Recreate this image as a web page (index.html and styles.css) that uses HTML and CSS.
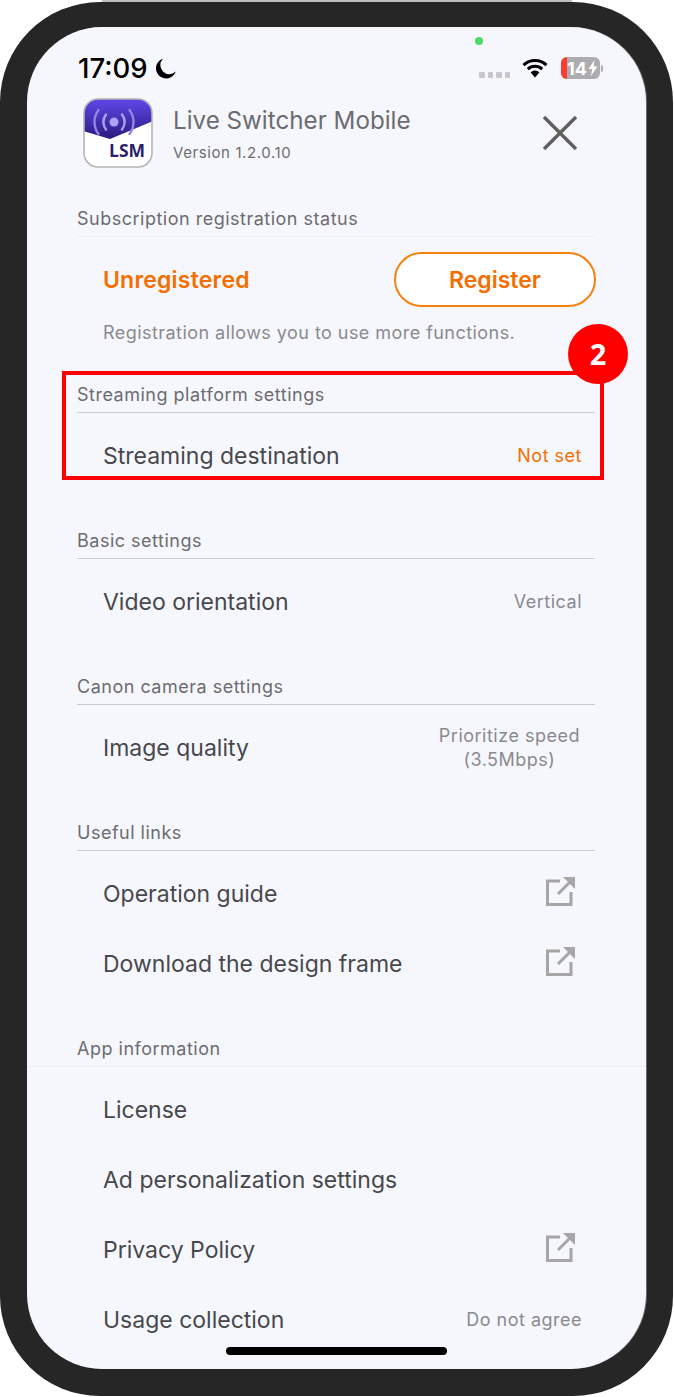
FILE: index.html
```html
<!DOCTYPE html>
<html lang="en">
<head>
    <meta charset="UTF-8">
    <meta name="viewport" content="width=device-width, initial-scale=1.0">
    <title>Live Switcher Mobile</title>
    <link rel="stylesheet" href="styles.css">
</head>
<body>
    <div class="phone-edge"></div>
    <div class="phone">
        <div class="screen">
            <div class="camera-dot"></div>
            <div class="status-bar">
                <div class="status-left">
                    <span class="clock">17:09</span>
                    <svg class="moon" viewBox="0 0 20 20"><path d="M7.6 0.6A9.7 9.7 0 1 0 19.8 12.9 8.6 8.6 0 0 1 7.6 0.6Z" fill="#000"/></svg>
                </div>
                <div class="status-right">
                    <div class="signal"><i></i><i></i><i></i><i></i></div>
                    <svg class="wifi" viewBox="0 0 26 20">
                        <path d="M1.5 7.2A16.5 16.5 0 0 1 24.5 7.2" fill="none" stroke="#000" stroke-width="3"/>
                        <path d="M5.8 11.2A10.4 10.4 0 0 1 20.2 11.2" fill="none" stroke="#000" stroke-width="3"/>
                        <path d="M8.6 14.4 13 19.5 17.4 14.4A6.2 6.2 0 0 0 8.6 14.4Z" fill="#000"/>
                    </svg>
                    <div class="battery">
                        <span class="battery-level"></span>
                        <span class="battery-text">14</span>
                        <svg class="bolt" viewBox="0 0 10 16"><path d="M6.5 0 0.5 9H4.2L3 16 9.5 6.5H5.6Z" fill="#fff"/></svg>
                    </div>
                    <span class="battery-nub"></span>
                </div>
            </div>

            <div class="app-header">
                <svg class="app-icon" viewBox="0 0 70 70">
                    <defs>
                        <linearGradient id="iconBlue" x1="0" y1="0" x2="0" y2="1">
                            <stop offset="0" stop-color="#6148ec"/>
                            <stop offset="1" stop-color="#2b1b7e"/>
                        </linearGradient>
                        <clipPath id="iconClip"><rect x="1" y="1" width="68" height="68" rx="14"/></clipPath>
                    </defs>
                    <rect x="1" y="1" width="68" height="68" rx="14" fill="#fff"/>
                    <path d="M0 0H70V23L27 41 0 33Z" fill="url(#iconBlue)" clip-path="url(#iconClip)"/>
                    <circle cx="31" cy="24" r="4.5" fill="#a9a4f5"/>
                    <path d="M23 16.5A12 12 0 0 0 23 31.5M39 16.5A12 12 0 0 1 39 31.5" fill="none" stroke="#a9a4f5" stroke-width="2.4" stroke-linecap="round"/>
                    <path d="M15.5 12A20 20 0 0 0 15.5 36M46.5 12A20 20 0 0 1 46.5 36" fill="none" stroke="#8d86e6" stroke-width="2.4" stroke-linecap="round"/>
                    <text class="icon-label" x="26" y="59">LSM</text>
                    <rect x="1" y="1" width="68" height="68" rx="14" fill="none" stroke="#b5b5b8" stroke-width="1.6"/>
                </svg>
                <div class="app-name">
                    <div class="app-title">Live Switcher Mobile</div>
                    <div class="app-version">Version 1.2.0.10</div>
                </div>
                <svg class="close-icon" viewBox="0 0 36 36"><path d="M2 2 34 34M34 2 2 34" stroke="#5f5f5f" stroke-width="3.4" fill="none"/></svg>
            </div>

            <div class="section first">
                <div class="section-title faint">Subscription registration status</div>
                <div class="register-row">
                    <span class="unregistered">Unregistered</span>
                    <button class="register-btn">Register</button>
                </div>
                <div class="note">Registration allows you to use more functions.</div>
            </div>

            <div class="section highlighted">
                <div class="section-title">Streaming platform settings</div>
                <div class="row">
                    <span class="row-label">Streaming destination</span>
                    <span class="row-value orange">Not set</span>
                </div>
                <div class="callout"></div>
                <div class="badge">2</div>
            </div>

            <div class="section">
                <div class="section-title">Basic settings</div>
                <div class="row">
                    <span class="row-label">Video orientation</span>
                    <span class="row-value">Vertical</span>
                </div>
            </div>

            <div class="section">
                <div class="section-title">Canon camera settings</div>
                <div class="row">
                    <span class="row-label">Image quality</span>
                    <span class="row-value two-line">Prioritize speed<br>(3.5Mbps)</span>
                </div>
            </div>

            <div class="section">
                <div class="section-title">Useful links</div>
                <div class="row">
                    <span class="row-label">Operation guide</span>
                    <svg class="ext-icon" viewBox="0 0 30 30"><path d="M14 5H1.5V28.5H25V16" fill="none" stroke="#a6a6a6" stroke-width="3"/><path d="M12 18 26 4" stroke="#a6a6a6" stroke-width="3" fill="none"/><path d="M17 1H29V13L25 9 21 5Z" fill="#a6a6a6"/></svg>
                </div>
                <div class="row">
                    <span class="row-label">Download the design frame</span>
                    <svg class="ext-icon" viewBox="0 0 30 30"><path d="M14 5H1.5V28.5H25V16" fill="none" stroke="#a6a6a6" stroke-width="3"/><path d="M12 18 26 4" stroke="#a6a6a6" stroke-width="3" fill="none"/><path d="M17 1H29V13L25 9 21 5Z" fill="#a6a6a6"/></svg>
                </div>
            </div>

            <div class="section wide-line">
                <div class="section-title">App information</div>
                <div class="row">
                    <span class="row-label">License</span>
                </div>
                <div class="row">
                    <span class="row-label">Ad personalization settings</span>
                </div>
                <div class="row">
                    <span class="row-label">Privacy Policy</span>
                    <svg class="ext-icon" viewBox="0 0 30 30"><path d="M14 5H1.5V28.5H25V16" fill="none" stroke="#a6a6a6" stroke-width="3"/><path d="M12 18 26 4" stroke="#a6a6a6" stroke-width="3" fill="none"/><path d="M17 1H29V13L25 9 21 5Z" fill="#a6a6a6"/></svg>
                </div>
                <div class="row">
                    <span class="row-label">Usage collection</span>
                    <span class="row-value">Do not agree</span>
                </div>
            </div>

            <div class="home-bar"></div>
        </div>
    </div>
</body>
</html>
```

FILE: styles.css
```css
* {
    box-sizing: border-box;
}
body {
    margin: 0;
    padding: 0;
    background-color: #fff;
    font-family: Inter, "Liberation Sans", sans-serif;
}
.phone-edge {
    width: 470px;
    height: 2px;
    margin-left: 102px;
    background-color: #bdbdbd;
}
.phone {
    width: 673px;
    height: 1394px;
    padding: 25px 27px 27px;
    background-color: #262626;
    border-radius: 100px;
}
.screen {
    position: relative;
    height: 1342px;
    overflow: hidden;
    background-color: #f6f7fc;
    border-radius: 75px;
    box-shadow: 1px 0 0 #6a6a6a;
}
.camera-dot {
    position: absolute;
    left: 448px;
    top: 10px;
    width: 8px;
    height: 8px;
    border-radius: 50%;
    background-color: #4cd964;
}
.status-bar {
    display: flex;
    justify-content: space-between;
    align-items: center;
    height: 30px;
    margin-top: 26px;
    padding: 0 43px 0 51px;
}
.status-left, .status-right {
    display: flex;
    align-items: center;
}
.clock {
    font-size: 27.5px;
    font-weight: 500;
    color: #000;
}
.moon {
    width: 21px;
    height: 21px;
    margin-left: 7px;
}
.signal {
    display: flex;
    gap: 3px;
    margin-top: 14px;
    margin-right: 12px;
}
.signal i {
    display: block;
    width: 5.5px;
    height: 5.5px;
    border-radius: 1px;
    background-color: #c6c6cb;
}
.wifi {
    width: 26px;
    height: 20px;
    margin-right: 13px;
}
.battery {
    display: flex;
    align-items: center;
    position: relative;
    width: 39px;
    height: 22px;
    padding-left: 6px;
    border-radius: 6px;
    overflow: hidden;
    background-color: #adadb0;
}
.battery-level {
    position: absolute;
    left: 0;
    top: 0;
    width: 6px;
    height: 22px;
    background-color: #ff3b30;
}
.battery-text {
    font-size: 18px;
    font-weight: 700;
    color: #fff;
}
.bolt {
    width: 10px;
    height: 16px;
    margin-left: 1px;
}
.battery-nub {
    width: 2px;
    height: 7px;
    margin-left: 1px;
    border-radius: 0 2px 2px 0;
    background-color: #adadb0;
}
.app-header {
    display: flex;
    align-items: flex-start;
    height: 70px;
    margin-top: 15px;
    padding-left: 56px;
}
.app-icon {
    width: 70px;
    height: 70px;
    flex-shrink: 0;
}
.icon-label {
    font-family: "Open Sans", sans-serif;
    font-size: 17.5px;
    font-weight: 700;
    fill: #2a1f6b;
}
.app-name {
    margin-left: 20px;
    flex: 1;
}
.app-title {
    font-size: 24.2px;
    line-height: 30px;
    margin-top: 8px;
    color: #6c6c70;
}
.app-version {
    font-size: 15px;
    letter-spacing: 0.6px;
    line-height: 20px;
    margin-top: 7px;
    color: #6c6c70;
}
.close-icon {
    width: 36px;
    height: 36px;
    margin: 17px 68px 0 0;
}
.section {
    position: relative;
    padding: 0 51px 0 50px;
    margin-top: 32px;
}
.section.first {
    margin-top: 33px;
}
.section-title {
    height: 36px;
    line-height: 35px;
    font-size: 18px;
    letter-spacing: 0.5px;
    color: #6c6c70;
    border-bottom: 1px solid #c9c9ce;
    margin-bottom: 8px;
}
.section-title.faint {
    border-bottom-color: #eceef3;
}
.wide-line .section-title {
    margin-left: -50px;
    margin-right: -51px;
    padding-left: 50px;
    border-bottom-color: #eceef3;
}
.row {
    display: flex;
    justify-content: space-between;
    align-items: center;
    height: 70px;
    padding: 0 13px 0 26px;
}
.row-label {
    font-size: 23px;
    color: #48484c;
}
.row-value {
    font-size: 18px;
    letter-spacing: 0.5px;
    margin-bottom: 2px;
    color: #8a8a8e;
}
.row-value.orange {
    color: #f56f00;
}
.row-value.two-line {
    line-height: 24px;
    text-align: center;
    margin-right: 2px;
    margin-bottom: 0;
}
.ext-icon {
    width: 30px;
    height: 30px;
    margin: -6px 6px 0 0;
}
.register-row {
    display: flex;
    justify-content: space-between;
    align-items: center;
    margin-top: 15px;
    padding-left: 26px;
}
.unregistered {
    font-size: 23px;
    letter-spacing: 0.2px;
    font-weight: 600;
    color: #f56f00;
}
.register-btn {
    width: 202px;
    height: 55px;
    margin-right: -1px;
    border: 2px solid #f5820f;
    border-radius: 28px;
    background-color: #fff;
    font-family: inherit;
    font-size: 23px;
    font-weight: 600;
    color: #f56f00;
}
.note {
    padding-left: 26px;
    margin-top: 14px;
    font-size: 18px;
    letter-spacing: 0.45px;
    line-height: 24px;
    color: #8a8a8e;
}
.callout {
    position: absolute;
    left: 35px;
    right: 42px;
    top: -6px;
    height: 109px;
    border: 4px solid #ff0000;
}
.badge {
    position: absolute;
    left: 541px;
    top: -53px;
    width: 60px;
    height: 60px;
    border-radius: 50%;
    background-color: #ff0000;
    color: #fff;
    font-family: "Noto Sans", sans-serif;
    font-size: 29px;
    font-weight: 700;
    line-height: 60px;
    text-align: center;
}
.home-bar {
    position: absolute;
    left: 199px;
    bottom: 14px;
    width: 221px;
    height: 8px;
    border-radius: 4px;
    background-color: #000;
}
```
